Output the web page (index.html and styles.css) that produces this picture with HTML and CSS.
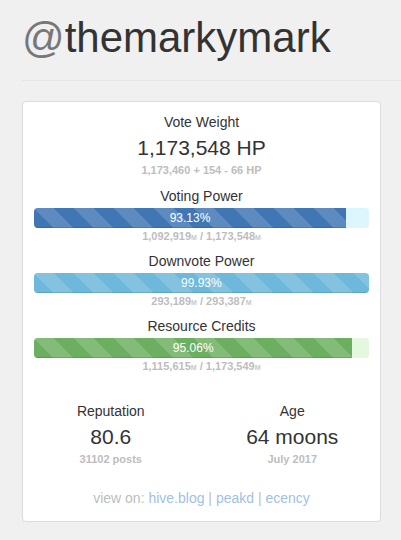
FILE: index.html
```html
<!doctype html>
<html>
    <head>
        <meta charset="utf-8">
        <link rel="stylesheet" href="styles.css">
    </head>
    <body>
        <div class="page">
            <h1 class="handle"><span class="at">@</span>themarkymark</h1>
            <hr class="rule">

            <div class="card">
                <div class="label">Vote Weight</div>
                <div class="value">1,173,548 HP</div>
                <div class="note">1,173,460 + 154 - 66 HP</div>

                <div class="meter">
                    <div class="label">Voting Power</div>
                    <div class="track track-blue">
                        <div class="bar bar-blue" style="width: 93.13%;">93.13%</div>
                    </div>
                    <div class="note">1,092,919<small>M</small> / 1,173,548<small>M</small></div>
                </div>

                <div class="meter">
                    <div class="label">Downvote Power</div>
                    <div class="track track-cyan">
                        <div class="bar bar-cyan" style="width: 99.93%;">99.93%</div>
                    </div>
                    <div class="note">293,189<small>M</small> / 293,387<small>M</small></div>
                </div>

                <div class="meter">
                    <div class="label">Resource Credits</div>
                    <div class="track track-green">
                        <div class="bar bar-green" style="width: 95.06%;">95.06%</div>
                    </div>
                    <div class="note">1,115,615<small>M</small> / 1,173,549<small>M</small></div>
                </div>

                <div class="pair">
                    <div class="cell">
                        <div class="label">Reputation</div>
                        <div class="value">80.6</div>
                        <div class="note">31102 posts</div>
                    </div>
                    <div class="cell">
                        <div class="label">Age</div>
                        <div class="value">64 moons</div>
                        <div class="note">July 2017</div>
                    </div>
                </div>

                <div class="links">
                    view on: <a href="#">hive.blog</a> | <a href="#">peakd</a> | <a href="#">ecency</a>
                </div>
            </div>
        </div>
    </body>
</html>
```

FILE: styles.css
```css
html, body {
    margin: 0;
    padding: 0;
}
body {
    background: #f0f0f0;
    color: #333;
    font-family: "Liberation Sans", Arial, sans-serif;
    font-size: 14px;
    line-height: 20px;
}
.page {
    padding: 15px 0 0 22px;
}
.handle {
    margin: 0;
    font-size: 42px;
    font-weight: normal;
    line-height: 46px;
    color: #333;
}
.handle .at {
    color: #777;
}
.rule {
    margin: 19px 0 20px;
    border: 0;
    border-top: 1px solid #e6e6e6;
}
.card {
    box-sizing: border-box;
    width: 359px;
    padding: 10px 11px 13px;
    background: #fff;
    border: 1px solid #dcdcdc;
    border-radius: 4px;
    box-shadow: 0 1px 1px rgba(0, 0, 0, 0.04);
    text-align: center;
}
.label {
    line-height: 20px;
}
.value {
    margin-top: 2px;
    font-size: 21px;
    line-height: 28px;
}
.note {
    font-size: 11px;
    font-weight: bold;
    line-height: 16px;
    color: #bdbdbd;
}
.note small {
    font-size: 7px;
    line-height: 0;
    color: #c8c8c8;
}
.meter {
    margin-top: 8px;
}
.meter + .meter {
    margin-top: 7px;
}
.track {
    margin-top: 2px;
    height: 20px;
    border-radius: 4px;
    overflow: hidden;
}
.track-blue {
    background: #ddf5fd;
}
.track-cyan {
    background: #dff2f9;
}
.track-green {
    background: #e4f8df;
}
.bar {
    height: 20px;
    color: #fff;
    font-size: 12px;
    line-height: 20px;
    background-image: linear-gradient(45deg, rgba(255, 255, 255, 0.15) 25%, transparent 25%, transparent 50%, rgba(255, 255, 255, 0.15) 50%, rgba(255, 255, 255, 0.15) 75%, transparent 75%, transparent);
    background-size: 40px 40px;
    box-shadow: inset 0 -1px 0 rgba(0, 0, 0, 0.12);
}
.bar-blue {
    background-color: #4176b4;
}
.bar-cyan {
    background-color: #6db8db;
}
.bar-green {
    background-color: #6daf60;
}
.pair {
    display: grid;
    grid-template-columns: 1fr 1fr;
    margin: 27px -14px 0;
}
.links {
    margin-top: 21px;
    color: #bdbdbd;
}
.links a {
    color: #a3bfdf;
    text-decoration: none;
}
```
